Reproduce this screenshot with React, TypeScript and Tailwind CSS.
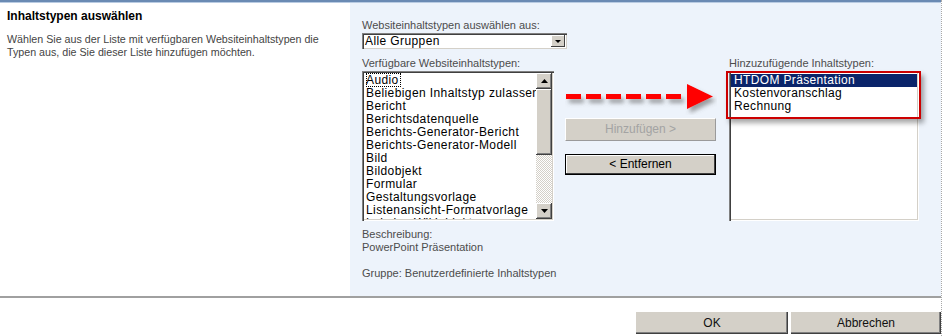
const leftItems = [
  'Audio',
  'Beliebigen Inhaltstyp zulassen',
  'Bericht',
  'Berichtsdatenquelle',
  'Berichts-Generator-Bericht',
  'Berichts-Generator-Modell',
  'Bild',
  'Bildobjekt',
  'Formular',
  'Gestaltungsvorlage',
  'Listenansicht-Formatvorlage',
  'Lokales Wikiobjekt',
];

const rightItems = ['HTDOM Präsentation', 'Kostenvoranschlag', 'Rechnung'];

function DashedArrow() {
  return (
    <svg width="152" height="34" viewBox="0 0 152 34">
      <defs>
        <filter id="sh" x="-10%" y="-50%" width="130%" height="200%">
          <feDropShadow dx="3" dy="4" stdDeviation="2" floodColor="#555" floodOpacity="0.55" />
        </filter>
      </defs>
      <g filter="url(#sh)" fill="#ff0000">
        {[0, 20, 40, 60, 80, 100].map((x) => (
          <rect key={x} x={x + 1} y="13" width="15" height="5" />
        ))}
        <polygon points="122,3 148,15.5 122,28" />
      </g>
    </svg>
  );
}

function ScrollArrow({ up }: { up?: boolean }) {
  return (
    <div className="h-[16px] w-[16px] bg-[#d4d0c8] shadow-[inset_-1px_-1px_#404040,inset_1px_1px_#ffffff,inset_-2px_-2px_#808080] flex items-center justify-center">
      <svg width="7" height="4" viewBox="0 0 7 4">
        <polygon points={up ? '3.5,0 7,4 0,4' : '0,0 7,0 3.5,4'} fill="#000" />
      </svg>
    </div>
  );
}

export default function App() {
  return (
    <div className="w-[943px] h-[336px] overflow-hidden bg-white font-['Liberation_Sans',Arial,sans-serif] text-[11px] leading-[13px]">
      <div className="w-[942px] h-full border-r border-dotted border-r-[#a8a8a8] flex flex-col">
        <div className="h-[2px] bg-[#6a8ab3]" />
        <div className="h-[1px] bg-[#b9cbe2]" />

        <div className="flex h-[295px] border-b-2 border-[#a0a0a0]">
          {/* left description */}
          <div className="w-[350px] pl-[7px] pt-[7px]">
            <div className="font-bold text-[12px] text-black">Inhaltstypen auswählen</div>
            <p className="mt-[10px] text-[10.7px] text-[#444] w-[330px]">
              Wählen Sie aus der Liste mit verfügbaren Websiteinhaltstypen die Typen aus, die Sie dieser Liste hinzufügen
              möchten.
            </p>
          </div>

          {/* right panel */}
          <div className="flex-1 bg-[#edf3fb] pl-[12px] pt-[16px] text-[#4c4c4c]">
            <div>Websiteinhaltstypen auswählen aus:</div>
            <div className="mt-[1px] w-[205px] h-[16px] bg-white shadow-[inset_1px_1px_#808080,inset_2px_2px_#404040,inset_-1px_-1px_#d4d0c8] flex items-center justify-between pl-[3px] pr-[2px] text-black text-[12px] tracking-[0.4px]">
              <span>Alle Gruppen</span>
              <div className="h-[12px] w-[14px] bg-[#d4d0c8] shadow-[inset_-1px_-1px_#404040,inset_1px_1px_#ffffff] flex items-center justify-center">
                <svg width="6" height="3" viewBox="0 0 6 3">
                  <polygon points="0,0 6,0 3,3" fill="#000" />
                </svg>
              </div>
            </div>

            <div className="flex mt-[8px]">
              {/* available */}
              <div className="w-[192px]">
                <div>Verfügbare Websiteinhaltstypen:</div>
                <div className="mt-[1px] h-[150px] bg-white flex shadow-[inset_1px_1px_#808080,inset_2px_2px_#404040,inset_-1px_-1px_#ffffff,inset_-2px_-2px_#d4d0c8] p-[2px]">
                  <div className="flex-1 h-[146px] overflow-hidden pt-[1px] text-black text-[12px] tracking-[0.4px]">
                    {leftItems.map((it, i) => (
                      <div key={it} className="h-[13px] leading-[13px] whitespace-nowrap pl-[2px]">
                        <span className={i === 0 ? 'outline outline-1 outline-dotted outline-black -outline-offset-1 pr-[2px]' : ''}>
                          {it}
                        </span>
                      </div>
                    ))}
                  </div>
                  <div className="w-[16px] flex flex-col">
                    <ScrollArrow up />
                    <div className="h-[66px] bg-[#d4d0c8] shadow-[inset_-1px_-1px_#404040,inset_1px_1px_#ffffff,inset_-2px_-2px_#808080]" />
                    <div className="flex-1 bg-[repeating-conic-gradient(#d4d0c8_0_25%,#ffffff_0_50%)] bg-[length:2px_2px]" />
                    <ScrollArrow />
                  </div>
                </div>
              </div>

              {/* middle buttons */}
              <div className="ml-[11px] w-[151px] pt-[24px] flex flex-col">
                <DashedArrow />
                <div className="mt-[3px] h-[23px] bg-[#d4d0c8] border border-t-white border-l-white border-r-[#9a9a9a] border-b-[#9a9a9a] flex items-center justify-center text-[12px] text-[#a3a3a3]">
                  Hinzufügen &gt;
                </div>
                <div className="mt-[13px] h-[21px] bg-[#d4d0c8] border border-black shadow-[inset_-1px_-1px_#404040,inset_1px_1px_#ffffff] flex items-center justify-center text-[12px] text-black">
                  &lt; Entfernen
                </div>
              </div>

              {/* to add */}
              <div className="ml-[13px] w-[190px]">
                <div>Hinzuzufügende Inhaltstypen:</div>
                <div className="relative mt-[1px]">
                  <div className="h-[150px] bg-white shadow-[inset_1px_1px_#808080,inset_2px_2px_#404040,inset_-1px_-1px_#ffffff,inset_-2px_-2px_#d4d0c8] p-[2px]">
                    <div className="pt-[1px] text-black text-[12px] tracking-[0.35px]">
                      {rightItems.map((it, i) => (
                        <div
                          key={it}
                          className={`h-[13px] leading-[13px] pl-[3px] whitespace-nowrap ${i === 0 ? 'bg-[#0a246a] text-white' : ''}`}
                        >
                          {it}
                        </div>
                      ))}
                    </div>
                  </div>
                  <div className="absolute left-[-3px] top-0 w-[195px] h-[48px] border-2 border-[#cc0000] shadow-[3px_4px_5px_rgba(0,0,0,0.35)]" />
                </div>
              </div>
            </div>

            <div className="mt-[7px]">Beschreibung:</div>
            <div>PowerPoint Präsentation</div>
            <div className="mt-[13px]">Gruppe: Benutzerdefinierte Inhaltstypen</div>
          </div>
        </div>

        {/* footer */}
        <div className="flex justify-end pt-[14px] gap-[3px]">
          <div className="w-[152px] h-[22px] bg-[#d4d0c8] shadow-[inset_-1px_-1px_#404040,inset_-2px_-2px_#808080] flex items-center justify-center text-[12px] text-[#111]">
            OK
          </div>
          <div className="w-[150px] h-[22px] bg-[#d4d0c8] shadow-[inset_-1px_-1px_#404040,inset_-2px_-2px_#808080] flex items-center justify-center text-[12px] text-[#111]">
            Abbrechen
          </div>
        </div>
      </div>
    </div>
  );
}
